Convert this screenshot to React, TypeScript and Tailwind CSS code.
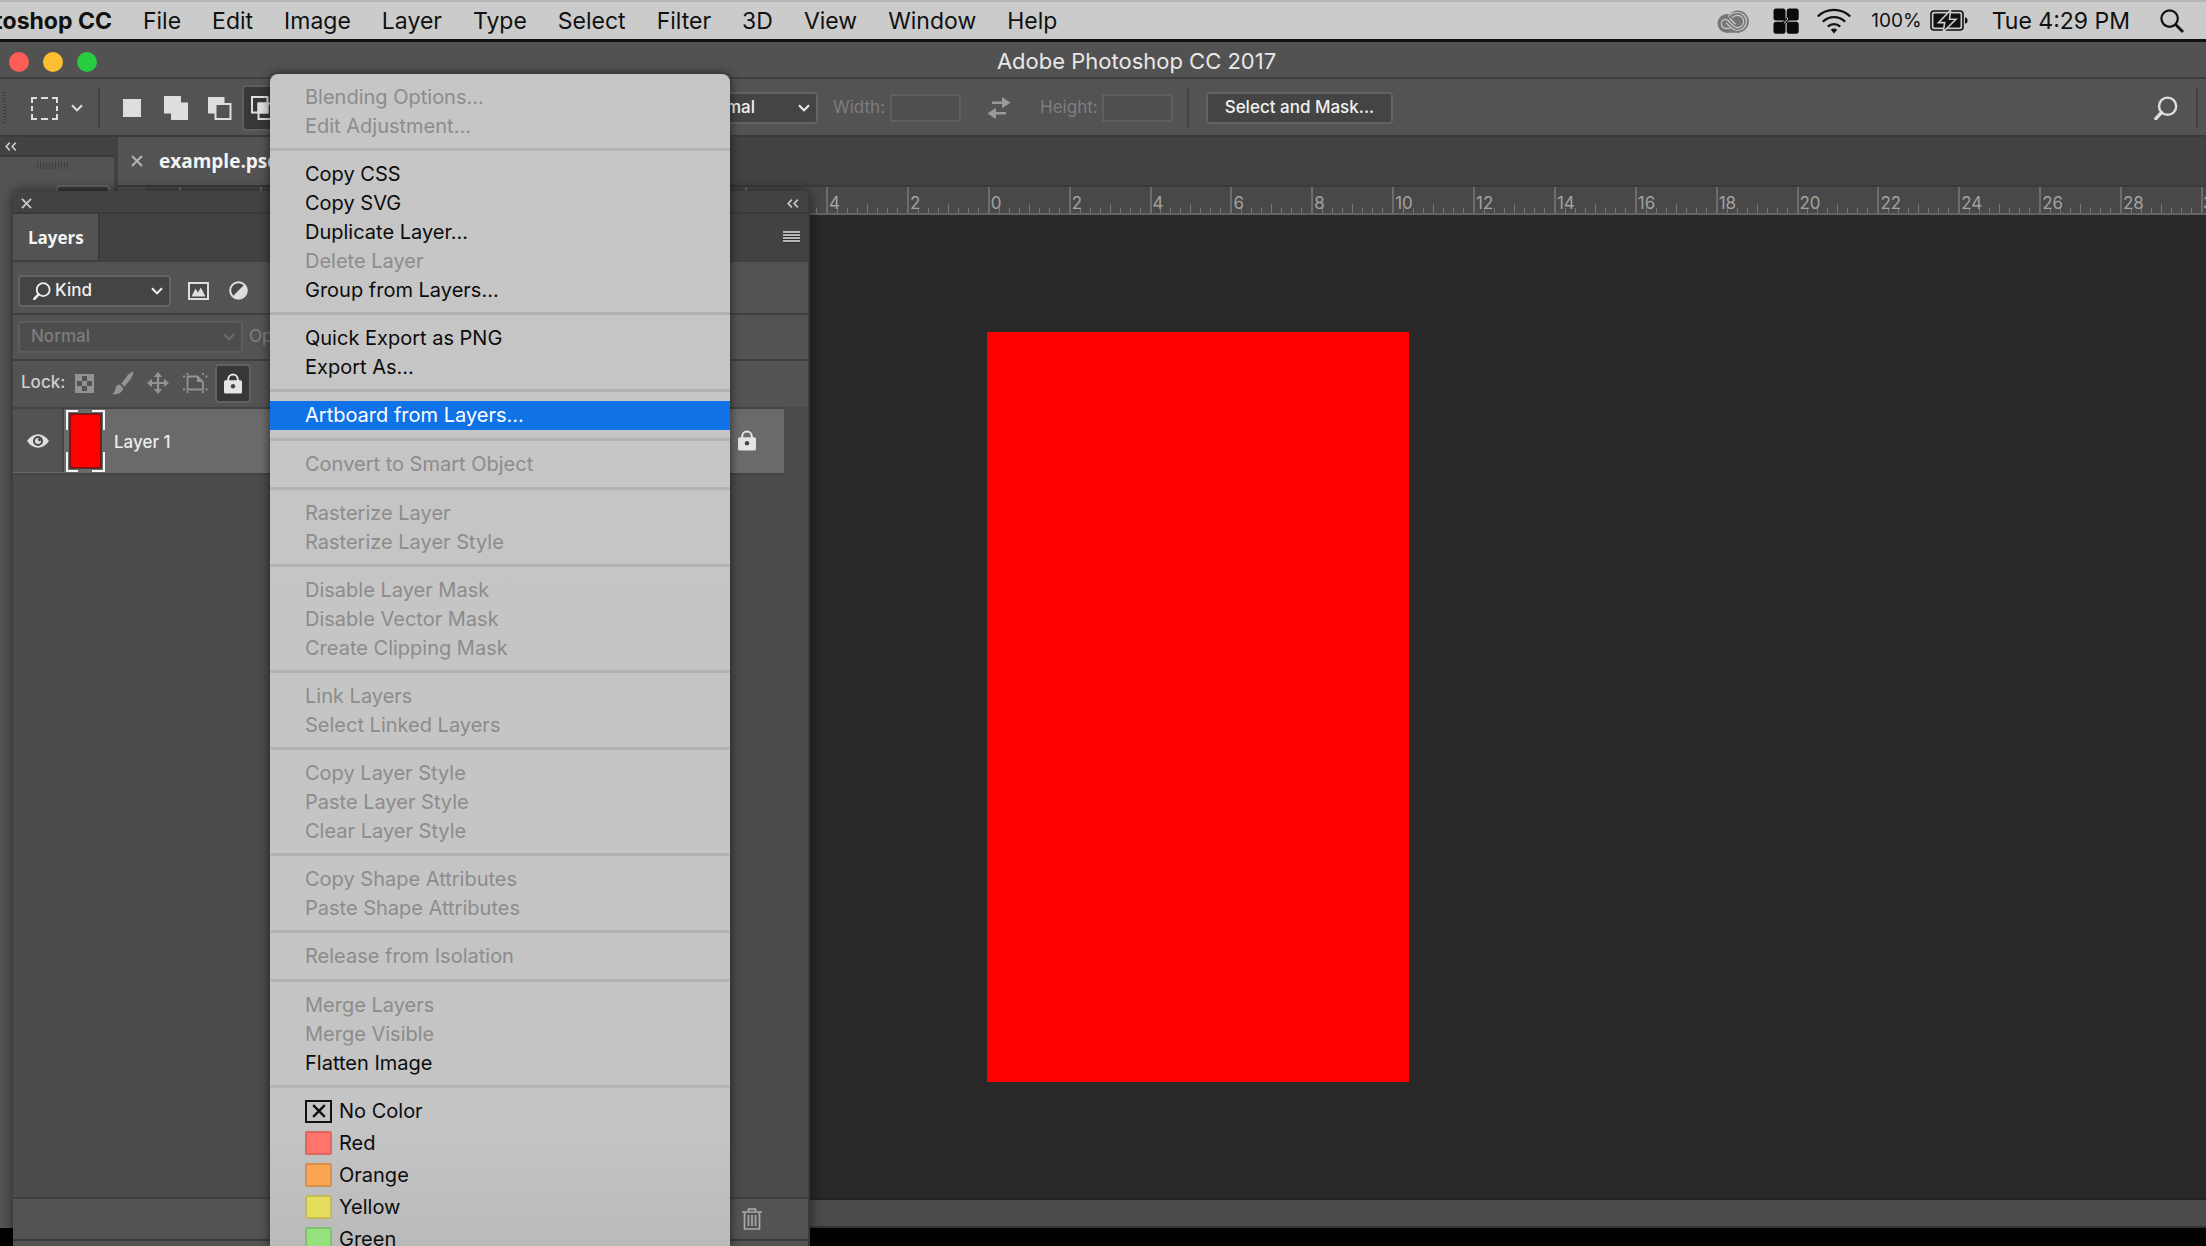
import clsx from 'clsx'
import type { ReactNode } from 'react'

type Item = { label: string, enabled?: boolean, active?: boolean }

const menus = ['File', 'Edit', 'Image', 'Layer', 'Type', 'Select', 'Filter', '3D', 'View', 'Window', 'Help']

const sections: Item[][] = [
  [{ label: 'Blending Options...' }, { label: 'Edit Adjustment...' }],
  [
    { label: 'Copy CSS', enabled: true },
    { label: 'Copy SVG', enabled: true },
    { label: 'Duplicate Layer...', enabled: true },
    { label: 'Delete Layer' },
    { label: 'Group from Layers...', enabled: true },
  ],
  [{ label: 'Quick Export as PNG', enabled: true }, { label: 'Export As...', enabled: true }],
  [{ label: 'Artboard from Layers...', enabled: true, active: true }],
  [{ label: 'Convert to Smart Object' }],
  [{ label: 'Rasterize Layer' }, { label: 'Rasterize Layer Style' }],
  [{ label: 'Disable Layer Mask' }, { label: 'Disable Vector Mask' }, { label: 'Create Clipping Mask' }],
  [{ label: 'Link Layers' }, { label: 'Select Linked Layers' }],
  [{ label: 'Copy Layer Style' }, { label: 'Paste Layer Style' }, { label: 'Clear Layer Style' }],
  [{ label: 'Copy Shape Attributes' }, { label: 'Paste Shape Attributes' }],
  [{ label: 'Release from Isolation' }],
  [{ label: 'Merge Layers' }, { label: 'Merge Visible' }, { label: 'Flatten Image', enabled: true }],
]

const colors = [
  { label: 'Red', swatch: 'bg-[#ff756c] border-[#e0655d]' },
  { label: 'Orange', swatch: 'bg-[#fca653] border-[#d98f4c]' },
  { label: 'Yellow', swatch: 'bg-[#e4dc5c] border-[#c2bb58]' },
  { label: 'Green', swatch: 'bg-[#95e27d] border-[#82c070]' },
]

const rulerMarks = [20, 18, 16, 14, 12, 10, 8, 6, 4, 2, 0, 2, 4, 6, 8, 10, 12, 14, 16, 18, 20, 22, 24, 26, 28]

function Chevron({ className }: { className?: string }) {
  return (
    <svg viewBox="0 0 12 8" fill="none" stroke="currentColor" strokeWidth="2" className={clsx('h-2 w-3', className)}>
      <path d="M1 1.2 6 6.4 11 1.2" />
    </svg>
  )
}

function DoubleChevron() {
  return (
    <svg viewBox="0 0 12 9" fill="none" stroke="currentColor" strokeWidth="1.7" className="h-[9px] w-3">
      <path d="M4.8.6 1.2 4.5l3.6 3.9M10.8.6 7.2 4.5l3.6 3.9" />
    </svg>
  )
}

function Cross({ className }: { className?: string }) {
  return (
    <svg viewBox="0 0 12 12" fill="none" stroke="currentColor" strokeWidth="2" className={className}>
      <path d="m1 1 10 10M11 1 1 11" />
    </svg>
  )
}

function Loupe({ className }: { className?: string }) {
  return (
    <svg viewBox="0 0 24 24" fill="none" stroke="currentColor" strokeWidth="2.4" className={className}>
      <circle cx="13.6" cy="10.2" r="8.6" />
      <path d="m7.4 16.6-5.6 6" strokeWidth="3.4" strokeLinecap="round" />
    </svg>
  )
}

function Lock() {
  return (
    <svg viewBox="0 0 20 21" className="h-[21px] w-5">
      <path d="M5.2 9V6.4a4.8 4.8 0 0 1 9.6 0V9" fill="none" stroke="#e4e4e4" strokeWidth="2" />
      <rect x="1" y="7.2" width="18" height="13.4" rx="1.6" fill="#e4e4e4" />
      <circle cx="10" cy="13.2" r="2.2" fill="#444" />
    </svg>
  )
}

function Rule() {
  return <div className="h-10 w-0.5 shrink-0 bg-[#424242]" />
}

function Dropdown({ id, label, value, disabled, className, children }: {
  id: string
  label: string
  value: string
  disabled?: boolean
  className?: string
  children?: ReactNode
}) {
  return (
    <div className={clsx('relative flex items-center', disabled ? 'text-[#7d7d7d]' : 'text-[#f0f0f0]')}>
      <label htmlFor={id} className="sr-only">{label}</label>
      {children}
      <select
        id={id}
        disabled={disabled}
        className={clsx(
          'h-8 w-full appearance-none rounded border-2 font-medium opacity-100',
          disabled ? 'border-[#5d5d5d] bg-[#4d4d4d]' : 'border-[#646464] bg-[#444444]',
          className,
        )}
      >
        <option>{value}</option>
      </select>
      <Chevron className={clsx('pointer-events-none absolute right-2', disabled && 'text-[#6b6b6b]')} />
    </div>
  )
}

function MenuBar() {
  return (
    <header className="flex h-[42px] shrink-0 items-center justify-between overflow-hidden border-b-3 border-[#111] bg-[#cbcbcb] pt-[3px] text-[23px] text-[#111] shadow-[inset_0_2px_0_#b5b5b5]">
      <nav className="-ml-[49px] flex items-center gap-[31px] whitespace-nowrap">
        <button className="font-bold">Photoshop CC</button>
        {menus.map(m => <button key={m}>{m}</button>)}
      </nav>
      <div className="flex items-center pr-[22px]">
        <svg viewBox="0 0 32 23" fill="none" className="mr-6 h-[23px] w-8">
          <circle cx="9.8" cy="13.4" r="9.3" fill="#777" />
          <circle cx="20.8" cy="11.5" r="11" fill="#777" />
          <path d="M9 15h14v7.7H9Z" fill="#777" />
          <path d="M12.6 12.2 10.900 10.500c-1.700-1.500-4-1.300-5.400.2a4.600 4.600 0 0 0 .2 6.300c.9.900 2.100 1.400 3.500 1.400h4.200M11.400 6.700C13.300 3.800 16.600 2.400 20.300 2.500a9 9 0 1 1 .3 18c-2.400 0-4.600-.9-6.300-2.600L9.200 13M15.200 7.900a6.400 6.400 0 0 1 5.600-2.500 6.100 6.100 0 1 1-.4 12.200c-1.600 0-2.900-.6-4-1.700l-5.500-5.400" stroke="#cbcbcb" strokeWidth="1.2" />
          <path d="m12.500 8.200 6 6" stroke="#cbcbcb" strokeWidth="1.4" />
        </svg>
        <svg viewBox="0 0 26 26" className="mr-[18px] size-[26px]" fill="#0a0a0a">
          <rect x=".5" y=".5" width="12" height="12" rx="2.5" />
          <rect x="13.7" y=".5" width="12" height="12" rx="2.5" />
          <rect x=".5" y="13.7" width="12" height="12" rx="2.5" />
          <rect x="13.7" y="13.7" width="12" height="12" rx="2.5" />
          <path d="m10 16 6-6" stroke="#0a0a0a" strokeWidth="3.5" />
          <path d="M11.800 15.500v-1.800l2.700-1.800v-2" fill="none" stroke="#cbcbcb" strokeWidth="1" />
        </svg>
        <svg viewBox="0 0 34 26" fill="none" stroke="#111" strokeWidth="2.3" className="mr-5 h-[26px] w-[34px]">
          <path d="M.8 8.500a23 23 0 0 1 32.400 0M5.800 13.700a16 16 0 0 1 22.400 0M10.800 18.700a9 9 0 0 1 12.400 0" />
          <path d="m13.800 21.800 3.200 3.600 3.200-3.600a4.500 4.500 0 0 0-6.400 0Z" fill="#111" stroke="none" />
        </svg>
        <span className="mr-2 text-[19px]">100%</span>
        <svg viewBox="0 0 38 22" className="mr-6 h-[22px] w-[38px]">
          <rect x="1" y="1" width="32" height="19" rx="3" fill="none" stroke="#111" strokeWidth="1.6" />
          <rect x="3.5" y="3.5" width="27" height="14" rx="1" fill="#111" />
          <path d="M35 7.200c2 .6 2.600 2 2.600 3.300s-.6 2.700-2.600 3.300Z" fill="#111" />
          <path d="M20.500.2 8.500 12.600h6.200l-1.500 9.200L26 9.200h-6.500Z" fill="#111" stroke="#cbcbcb" strokeWidth="1.6" />
        </svg>
        <span className="mr-[30px]">Tue 4:29 PM</span>
        <button aria-label="Search">
          <svg viewBox="0 0 24 24" fill="none" stroke="#111" strokeWidth="2.2" className="size-6">
            <circle cx="9.6" cy="9.6" r="8.2" />
            <path d="m15.600 15.600 7.400 7.400" strokeWidth="2.8" />
          </svg>
        </button>
      </div>
    </header>
  )
}

function TitleBar() {
  return (
    <div className="flex h-[37px] shrink-0 items-center gap-[14px] border-b-2 border-[#3f3f3f] bg-[#525252] pt-1 pl-[9px]">
      <button aria-label="Close" className="size-5 rounded-full bg-[#fe5d57]" />
      <button aria-label="Minimize" className="size-5 rounded-full bg-[#fdbe2f]" />
      <button aria-label="Zoom" className="size-5 rounded-full bg-[#28cc41]" />
      <h1 className="flex-1 pr-11 text-center text-[22px] text-[#e8e8e8]">Adobe Photoshop CC 2017</h1>
    </div>
  )
}

function OptionsBar() {
  return (
    <div className="flex h-[58px] shrink-0 items-center border-b-2 border-[#3b3b3b] bg-[#535353] pt-[2px] text-[17px] text-[#7d7d7d]">
      <div className="ml-[3px] h-8 w-[3px] bg-[repeating-linear-gradient(#3c3c3c_0_1px,transparent_1px_3px)]" />
      <button aria-label="Rectangular marquee" className="ml-[25px] flex items-center gap-[13px] text-[#dedede]">
        <svg viewBox="0 0 27 23" fill="none" stroke="currentColor" strokeWidth="2" className="h-[23px] w-[27px]">
          <path d="M1 6V1h5M10 1h7M21 1h5v5M26 9v5M26 17v5h-5M17 22h-7M6 22H1v-5M1 14V9" />
        </svg>
        <Chevron />
      </button>
      <div className="mr-[23px] ml-[15px]"><Rule /></div>
      <div className="flex items-center text-[#dedede]">
        <button aria-label="New selection" className="mr-[23px] size-[18px] bg-[#dedede]" />
        <button aria-label="Add to selection" className="mr-5">
          <svg viewBox="0 0 24 24" fill="currentColor" className="size-6"><path d="M0 0h17v6.500h7V24H7v-6.500H0Z" /></svg>
        </button>
        <button aria-label="Subtract from selection" className="mr-[10px]">
          <svg viewBox="0 0 24 24" className="size-6">
            <path d="M0 1h16.500v16.500H0Z" fill="currentColor" />
            <path d="M7.500 8h15v15h-15Z" fill="#535353" stroke="currentColor" strokeWidth="2" />
          </svg>
        </button>
        <button aria-label="Intersect with selection" className="rounded border-2 border-[#5e5e5e] bg-[#373737] px-[7px] py-[9px]">
          <svg viewBox="0 0 24 24" fill="none" stroke="currentColor" strokeWidth="2" className="size-6">
            <path d="M7.500 7.500h9v9h-9Z" fill="currentColor" />
            <path d="M1 1h15.500v15.500H1ZM7.500 7.500H23V23H7.500Z" />
          </svg>
        </button>
      </div>
      <div className="ml-[402px] w-[132px]">
        <Dropdown id="style" label="Style" value="Normal" className="pl-2" />
      </div>
      <label htmlFor="width" className="ml-[15px]">Width:</label>
      <input id="width" disabled className="ml-[5px] h-7 w-[71px] border-2 border-[#5f5f5f] bg-[#4f4f4f]" />
      <svg viewBox="0 0 24 24" fill="#9a9a9a" className="ml-[26px] size-6">
        <path d="M5 5.500h10V1l8.500 5.800L15 12.300V8H5ZM19 16H9v-4.300L.5 17.400 9 23v-4.500h10Z" />
      </svg>
      <label htmlFor="height" className="ml-[29px]">Height:</label>
      <input id="height" disabled className="ml-1 h-7 w-[71px] border-2 border-[#5f5f5f] bg-[#4f4f4f]" />
      <div className="mr-[17px] ml-[14px]"><Rule /></div>
      <button className="h-8 rounded border-2 border-[#636363] bg-[#444444] px-[17px] font-medium text-[#f0f0f0]">Select and Mask...</button>
      <button aria-label="Search" className="mr-[18px] ml-auto text-[#dedede]"><Loupe className="size-6" /></button>
      <div className="mr-2"><Rule /></div>
    </div>
  )
}

function Ruler() {
  return (
    <div className="flex h-[30px] shrink-0 overflow-hidden border-t-2 border-b-2 border-t-[#3a3a3a] border-b-[#636363] bg-[#484848] text-[17px] text-[#a2a2a2]">
      <div className="w-[61px] shrink-0"><div className="h-full w-7 bg-[#525252]" /></div>
      {rulerMarks.map((m, i) => (
        <div key={i} className="relative flex flex-1 items-end justify-evenly border-l-2 border-[#6c6c6c]">
          {[1, 2, 3, 4, 5, 6, 7].map(t => (
            <i key={t} className={clsx('w-px bg-[#757575]', t === 4 ? 'h-[9px]' : 'h-[5px]')} />
          ))}
          <span className="absolute bottom-0 left-px leading-5">{m}</span>
        </div>
      ))}
      <div className="w-[5px] shrink-0 overflow-hidden border-l-2 border-[#6c6c6c] pt-[6px] leading-5">30</div>
    </div>
  )
}

function Workspace() {
  return (
    <div className="mb-[18px] flex min-h-0 flex-1 bg-[#535353]">
      <aside className="w-[114px] shrink-0">
        <div className="flex h-5 items-center border-b-2 border-[#3b3b3b] bg-[#424242] pl-[5px] text-[#c8c8c8]"><DoubleChevron /></div>
        <div className="mt-[5px] ml-[37px] h-[7px] w-[33px] bg-[repeating-linear-gradient(90deg,#3e3e3e_0_1px,transparent_1px_3px)]" />
        <div className="mt-4 ml-14 h-9 w-[54px] rounded border-2 border-[#646464] bg-[#393939]" />
      </aside>
      <main className="flex min-w-0 flex-1 flex-col border-l-4 border-[#414141]">
        <div className="flex h-12 shrink-0 bg-[#424242]">
          <div className="flex items-center gap-4 bg-[#535353] px-[13px]">
            <button aria-label="Close tab" className="text-[#b5b5b5]"><Cross className="size-3" /></button>
            <span className="font-['Open_Sans'] text-[19px] font-bold text-[#f4f4f4]">example.psd</span>
          </div>
        </div>
        <Ruler />
        {/* canvas */}
        <div className="relative flex-1 bg-[#282828]">
          <div className="absolute top-[117px] left-[869px] h-[750px] w-[422px] bg-[#fe0000]" />
        </div>
        <div className="h-[30px] shrink-0 border-y-2 border-t-[#222] border-b-[#333] bg-[#4b4b4b]" />
      </main>
    </div>
  )
}

function LayersPanel() {
  return (
    <section className="absolute top-[191px] bottom-0 left-[13px] flex w-[797px] flex-col rounded-t-lg border-r-2 border-[#3a3a3a] bg-[#535353] text-[17px] text-[#dcdcdc] shadow-[0_0_10px_2px_#00000066]">
      <div className="flex h-[23px] items-center justify-between rounded-t-lg border-b-2 border-[#393939] bg-[#424242] pt-1 pr-[9px] pl-2 text-[#c8c8c8]">
        <button aria-label="Close panel"><Cross className="size-[11px]" /></button>
        <button aria-label="Collapse panel"><DoubleChevron /></button>
      </div>
      <div className="flex h-[46px] items-center justify-between bg-[#424242] pr-2">
        <h2 className="flex h-full w-[87px] items-center border-r-2 border-[#393939] bg-[#535353] pt-[2px] pl-[15px] font-['Open_Sans'] font-bold text-[#f4f4f4]">Layers</h2>
        <button aria-label="Panel menu" className="h-3 w-[17px] bg-[repeating-linear-gradient(#b8b8b8_0_2px,#2a2a2a_2px_3px)]" />
      </div>
      <div className="flex h-[55px] items-center border-t-2 border-b-2 border-[#3f3f3f] pt-[6px] pl-[5px]">
        <div className="w-[153px]">
          <Dropdown id="kind" label="Filter" value="Kind" className="pl-[35px]">
            <Loupe className="pointer-events-none absolute left-[15px] size-[18px]" />
          </Dropdown>
        </div>
        <button aria-label="Filter for pixel layers" className="mr-5 ml-[17px]">
          <svg viewBox="0 0 21 18" className="h-[18px] w-[21px]">
            <path d="M1 1h19v16H1Z" fill="#484848" stroke="#dedede" strokeWidth="2" />
            <path d="m3.500 14.500 4-8 2.500 4 2.800-5 4.700 9Z" fill="#dedede" />
          </svg>
        </button>
        <button aria-label="Filter for adjustment layers">
          <svg viewBox="0 0 19 19" className="size-[19px]">
            <circle cx="9.5" cy="9.5" r="8.3" fill="#484848" stroke="#dedede" strokeWidth="2" />
            <path d="M15.400 3.600A8.400 8.400 0 0 1 3.600 15.400Z" fill="#dedede" />
          </svg>
        </button>
      </div>
      <div className="flex h-[46px] items-center gap-[6px] border-b-2 border-[#3f3f3f] pl-[5px] text-[#808080]">
        <div className="w-[225px]">
          <Dropdown id="blend" label="Blend mode" value="Normal" disabled className="pl-[11px]" />
        </div>
        <span>Opacity:</span>
      </div>
      <div className="flex h-[46px] items-center pb-[2px] pl-2 text-[#939393]">
        <span className="w-[54px] font-medium text-[#cfcfcf]">Lock:</span>
        <button aria-label="Lock transparent pixels">
          <svg viewBox="0 0 19 19" fill="currentColor" className="size-[19px]">
            <path d="M1 1h17v17H1Z" fill="none" stroke="currentColor" strokeWidth="2" />
            <path d="M1 1h6v6H1ZM12 1h6v6h-6ZM7 7h5v5H7ZM1 12h6v6H1ZM12 12h6v6h-6Z" />
          </svg>
        </button>
        <button aria-label="Lock image pixels" className="ml-[18px]">
          <svg viewBox="0 0 22 24" fill="currentColor" className="h-6 w-[22px]">
            <path d="M21.500.5C19.500 1 17.500 2.200 16 3.800L9.200 12.500l3.300 3.200L19 7.500C20.500 5.300 21.300 3 21.500.5ZM7.800 13.500c-2.800.2-4.300 2-4.600 4.700C3 20.300 2 21.800.2 23c4.800.9 9.800-.6 11-5.800Z" />
          </svg>
        </button>
        <button aria-label="Lock position" className="ml-[13px]">
          <svg viewBox="0 0 22 22" fill="currentColor" className="size-[22px]">
            <path d="m11 0 4.300 5h-3.200v4.900H17V6.700L22 11l-5 4.300v-3.200h-4.900V17h3.200L11 22l-4.300-5h3.200v-4.900H5v3.200L0 11l5-4.300v3.200h4.900V5H6.700Z" />
          </svg>
        </button>
        <button aria-label="Prevent auto-nesting" className="ml-[14px]">
          <svg viewBox="0 0 25 20" fill="none" stroke="currentColor" strokeWidth="1.8" className="h-5 w-[25px]">
            <path d="M4.500 3.500H14.500L20 9v7.500H4.500Z" />
            <path d="M14 3.500V9h6Z" fill="currentColor" stroke="none" />
            <path d="M4.500 0v2M0 3.500h2M20 0v2M22.500 3.500h2M20 18v2M22.500 16.500h2M0 16.500h2M4.500 18v2" />
          </svg>
        </button>
        <button aria-label="Lock all" className="ml-[7px] flex h-[39px] w-9 items-center justify-center rounded border-2 border-[#616161] bg-[#373737]"><Lock /></button>
      </div>
      <div className="flex-1 border-b-2 border-[#404040] bg-[#4b4b4b]">
        <div className="mr-6 flex h-[68px] items-center border-y-2 border-[#434343] bg-[#6a6a6a] pb-px">
          <button aria-label="Toggle visibility" className="flex h-full w-[51px] items-center justify-center border-r-2 border-[#454545] bg-[#535353]">
            <svg viewBox="0 0 22 14" className="h-[14px] w-[22px]">
              <path d="M0 7C3 2.500 6.800.3 11 .3S19 2.500 22 7c-3 4.500-6.800 6.700-11 6.700S3 11.500 0 7Z" fill="#dedede" />
              <circle cx="11" cy="7" r="5" fill="#4a4a4a" />
              <circle cx="11" cy="7" r="3" fill="#dedede" />
              <circle cx="12.5" cy="5.6" r="1.6" fill="#4a4a4a" />
            </svg>
          </button>
          <svg viewBox="0 0 39 62" className="ml-[2px] h-[62px] w-[39px]">
            <path d="M4 4h31v54H4Z" fill="#fe0000" stroke="#5a1a1a" strokeWidth="1.5" />
            <path d="M1 20V1h11M26 1h12v19M38 42v19H26M12 61H1V42" fill="none" stroke="#f4f4f4" strokeWidth="2" />
          </svg>
          <span className="ml-[9px] pt-1 font-medium text-[#ececec]">Layer 1</span>
          <div className="mr-[27px] ml-auto"><Lock /></div>
        </div>
      </div>
      <div className="flex h-[40px] items-center justify-end pr-[46px] text-[#a8a8a8]">
        <button aria-label="Delete layer">
          <svg viewBox="0 0 20 22" fill="none" stroke="currentColor" strokeWidth="1.7" className="h-[22px] w-5">
            <path d="M0 4h20M6.500 4V1.200h7V4M2.500 4v17h15V4M6.500 7v11M10 7v11M13.500 7v11" />
          </svg>
        </button>
      </div>
      <div className="h-[7px] border-t-2 border-[#3a3a3a]" />
    </section>
  )
}

function LayerMenu() {
  return (
    <div role="menu" className="absolute top-[74px] bottom-0 left-[270px] w-[460px] overflow-hidden rounded-t-lg bg-[linear-gradient(#c6c6c6,#c4c4c4_90%,#bababa)] text-xl text-[#0c0c0c] shadow-[0_0_10px_1px_#00000088]">
      {sections.map((items, i) => (
        <div key={i} className="flex min-h-[49px] flex-col justify-center border-b-3 border-[#b3b3b3] py-2">
          {items.map(item => (
            <button
              key={item.label}
              role="menuitem"
              disabled={!item.enabled}
              className={clsx(
                'h-[29px] shrink-0 pl-[35px] text-left leading-7',
                item.active && 'bg-[#0f72e6] text-white',
                !item.enabled && 'text-[#8c8c8c]',
              )}
            >
              {item.label}
            </button>
          ))}
        </div>
      ))}
      <div className="flex flex-col pt-[7px]">
        <button role="menuitem" className="flex h-8 items-center gap-[7px] pl-[35px]">
          <span className="flex h-[23px] w-[27px] items-center justify-center border-2 border-[#111]"><Cross className="size-[14px]" /></span>
          No Color
        </button>
        {colors.map(c => (
          <button key={c.label} role="menuitem" className="flex h-8 shrink-0 items-center gap-[7px] pl-[35px]">
            <span className={clsx('h-6 w-[27px] rounded-xs border-2', c.swatch)} />
            {c.label}
          </button>
        ))}
      </div>
    </div>
  )
}

export default function App() {
  return (
    <div className="relative flex h-screen flex-col overflow-hidden bg-black font-[Inter,sans-serif]">
      <MenuBar />
      <TitleBar />
      <OptionsBar />
      <Workspace />
      <LayersPanel />
      <LayerMenu />
    </div>
  )
}
